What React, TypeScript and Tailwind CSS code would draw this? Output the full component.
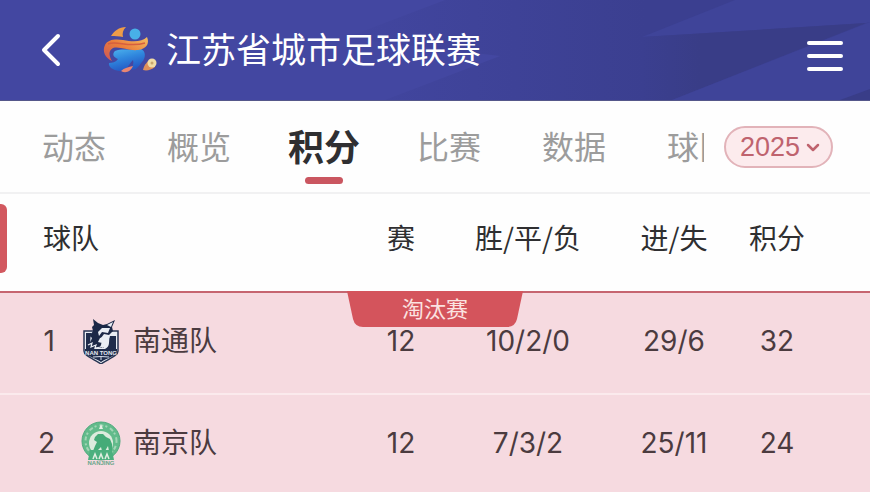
import React from "react";

const tabs = ["动态", "概览", "积分", "比赛", "数据", "球队"];

function LeagueLogo() {
  return (
    <svg className="h-[52px] w-[56px] shrink-0" viewBox="0 0 56 52" aria-hidden="true">
      <defs>
        <linearGradient id="body" x1="0" y1="0" x2="0.4" y2="1">
          <stop offset="0" stopColor="#4fb6ee" />
          <stop offset="0.5" stopColor="#2f86dd" />
          <stop offset="1" stopColor="#2358c4" />
        </linearGradient>
        <linearGradient id="ribbon" x1="0" y1="1" x2="1" y2="0">
          <stop offset="0" stopColor="#c9545a" />
          <stop offset="0.5" stopColor="#ea7c3c" />
          <stop offset="1" stopColor="#f6c062" />
        </linearGradient>
      </defs>
      <path d="M9 12 C12 7 17 3 24 3 C21 6 20 9 21 13 C17 12 13 12 9 12Z" fill="#ee9c48" />
      <circle cx="33" cy="10" r="5.5" fill="#48b0e8" />
      <path d="M13 27 C20 24 30 27 39 25 C44 27 44 34 40 38 C36 43 34 47 29 45 C31 42 32 39 31 36 C27 40 24 48 17 47 C11 46 6 43 7 39 C10 39 14 38 16 35 C11 33 10 30 13 27Z" fill="url(#body)" />
      <path d="M10 37 C3 34 0 27 3 21 C6 15 14 15 21 16 C31 18 40 18 45 13 C48 20 44 25 36 26 C26 27 18 22 11 24 C6 27 7 32 10 37Z" fill="url(#ribbon)" />
      <path d="M6 20 C15 16 26 24 43 19" fill="none" stroke="#d65f3e" strokeWidth="1.5" />
      <path d="M19 47 C22 44 27 43 31 42 C29 47 24 50 19 47Z" fill="#ea8672" />
      <path d="M41 46 C42 41 45 37 50 35 L53 43 C49 46 45 47 41 46Z" fill="#e0905a" />
      <circle cx="50" cy="39" r="4.5" fill="#f1dba4" />
      <circle cx="50" cy="39" r="1.5" fill="#c9a56d" />
    </svg>
  );
}

function NantongBadge() {
  return (
    <svg className="h-[46px] w-10 shrink-0" viewBox="0 0 40 46" role="img" aria-label="南通队队徽">
      <path d="M3 13 H37 V33 C37 38 27 41 20 46 C13 41 3 38 3 33Z" fill="#e9edf4" stroke="#283553" strokeWidth="1.5" />
      <path d="M5 15 H11 C8 21 9 26 14 31 H5Z" fill="#1f2c4c" />
      <path d="M29 18 H35 V31 H24 C30 28 27 23 29 18Z" fill="#1f2c4c" />
      <path d="M12 1 L17 5 L22 7 L26 6 L34 2 L31 9 L32 13 L28 17 L23 16 L20 20 L24 21 L20 26 L23 30 H11 L9 25 L11 20 L9 18 L12 13 L11 9 L13 7Z" fill="#1c2847" />
      <path d="M26 7 L32 4 L30 9Z M21 10 L29 10 L27 15 L21 14 L18 18 L17 14Z M19 20 L25 18 L29 19 L24 22 L26 26 L22 30 L19 29 L21 25 L17 24Z" fill="#e9edf4" />
      <path d="M7 27 L11 25 L10 29 L15 27 L14 30 L20 29" fill="none" stroke="#e9edf4" strokeWidth="1.2" />
      <path d="M4 31 H36 V34 C35 38 26 40 20 44 C14 40 5 38 4 34Z" fill="#1f2c4c" />
      <text x="20" y="37" textAnchor="middle" fontSize="6" fontWeight="700" fontFamily="Liberation Sans, sans-serif" fill="#e4e8f0">NAN TONG</text>
      <path d="M12 39 Q20 38 28 39 M20 39 V42" fill="none" stroke="#d8deea" strokeWidth="1" />
    </svg>
  );
}

function NanjingBadge() {
  return (
    <svg className="h-[46px] w-10 shrink-0" viewBox="0 0 40 46" role="img" aria-label="南京队队徽">
      <circle cx="20" cy="21" r="19" fill="#62bb8b" stroke="#4fa97d" strokeWidth="1" />
      <circle cx="20" cy="21" r="15.5" fill="none" stroke="#a3d5b6" strokeWidth="2" strokeDasharray="2 3 4 2" />
      <circle cx="20" cy="23" r="12" fill="#dcebdd" />
      <path d="M20 4 L22 9 H18Z" fill="#e7efe5" />
      <path d="M14 17 L17 14 L22 14 L25 17 L29 19 L31 24 L31 31 H28 L27 26 L24 31 H21 L20 27 L16 31 H12 L14 26 L16 22 L13 20Z" fill="#45ab78" />
      <path d="M9 30 H31 L33 40 H7Z" fill="#4bb07e" />
      <path d="M12 39 L14 34 L16 39 M18 39 L20 34 L22 39 M24 39 L26 34 L28 39" fill="none" stroke="#e0eee1" strokeWidth="1.5" />
      <text x="20" y="45" textAnchor="middle" fontSize="6" fontWeight="700" fontFamily="Liberation Sans, sans-serif" fill="#6aa58a">NANJING</text>
    </svg>
  );
}

const rows = [
  { rank: 1, team: "南通队", Badge: NantongBadge, played: "12", record: "10/2/0", goals: "29/6", points: "32" },
  { rank: 2, team: "南京队", Badge: NanjingBadge, played: "12", record: "7/3/2", goals: "25/11", points: "24" },
];

function Header() {
  return (
    <header className="relative flex h-[101px] items-center border-b border-[#55578a] bg-[#4347a1] px-[27px] text-white">
      <svg className="absolute inset-0 h-full w-full" viewBox="0 0 870 100" preserveAspectRatio="none" aria-hidden="true">
        <defs>
          <linearGradient id="shade" gradientUnits="userSpaceOnUse" x1="345" y1="0" x2="645" y2="0">
            <stop offset="0" stopColor="#4246a0" />
            <stop offset="1" stopColor="#3b3f90" />
          </linearGradient>
          <linearGradient id="wedge" gradientUnits="userSpaceOnUse" x1="642" y1="0" x2="700" y2="0">
            <stop offset="0" stopColor="#3b3f90" />
            <stop offset="1" stopColor="#393d87" />
          </linearGradient>
        </defs>
        <path d="M445 0 L345 38 L500 56 L385 100 H870 V0Z" fill="url(#shade)" />
        <path d="M735 0 L642 37 L866 23 L870 22 V0Z" fill="#3f4499" />
        <path d="M642 37 L866 23 L672 100 H642Z" fill="url(#wedge)" />
        <path d="M870 22 L672 100 H870Z" fill="#3f4499" />
        <path d="M840 100 L870 89 V100Z" fill="#393d88" />
      </svg>
      <button type="button" aria-label="返回" className="relative flex h-12 w-12 items-center justify-center">
        <svg className="h-[34px] w-5" viewBox="0 0 20 34" fill="none" stroke="currentColor" strokeWidth="4" strokeLinecap="round" strokeLinejoin="round">
          <path d="M17 3 L3 17 L17 31" />
        </svg>
      </button>
      <div className="relative ml-[27px] flex grow items-center gap-2">
        <LeagueLogo />
        <h1 className="pb-1 text-[35px] leading-[48px]">江苏省城市足球联赛</h1>
      </div>
      <button type="button" aria-label="菜单" className="relative mt-3 flex w-9 flex-col gap-[9px]">
        <span className="h-1 w-full rounded-full bg-white" />
        <span className="h-1 w-full rounded-full bg-white" />
        <span className="h-1 w-full rounded-full bg-white" />
      </button>
    </header>
  );
}

function TabBar() {
  return (
    <div className="flex h-[93px] items-center border-b-2 border-[#f1f1f2] pr-[37px]">
      <nav className="flex h-full min-w-0 grow items-center gap-[61px] overflow-hidden pl-[42px]">
        {tabs.map((tab) =>
          tab === "积分" ? (
            <a key={tab} href="#" aria-current="page" className="relative flex h-full w-16 shrink-0 items-center justify-center pb-1 text-[36px] font-bold whitespace-nowrap text-[#2f2f31]">
              {tab}
              <span className="absolute bottom-2 h-[7px] w-[38px] rounded-full bg-[#ca5660]" />
            </a>
          ) : (
            <a key={tab} href="#" className="w-16 shrink-0 pb-1 text-[32px] whitespace-nowrap text-[#9c9c9c]">
              {tab}
            </a>
          )
        )}
      </nav>
      <div className="relative ml-5 shrink-0">
        <select aria-label="赛季" className="block h-[42px] w-[109px] appearance-none rounded-full border-2 border-[#e2b3b9] bg-[#fcebed] pl-[14px] font-['Liberation_Sans',Arial,sans-serif] text-[27px] leading-[38px] text-[#bf636e]">
          <option>2025</option>
        </select>
        <svg className="pointer-events-none absolute top-[17px] right-[13px] h-[9px] w-[14px]" viewBox="0 0 14 9" fill="none" stroke="#bf636e" strokeWidth="2.5" strokeLinecap="round" strokeLinejoin="round" aria-hidden="true">
          <path d="M2 2 L7 7 L12 2" />
        </svg>
      </div>
    </div>
  );
}

function Standings() {
  return (
    <main className="relative text-[#2f2f31]">
      <span className="absolute top-[10px] left-0 h-[69px] w-[7px] rounded-r-md bg-[#d2585f]" />
      <table className="w-full table-fixed border-collapse">
        <colgroup>
          <col className="w-[55px]" />
          <col />
          <col className="w-[82px]" />
          <col className="w-[172px]" />
          <col className="w-[120px]" />
          <col className="w-[136px]" />
        </colgroup>
        <thead>
          <tr className="h-[98px] border-b-2 border-[#c66570] text-[28px] whitespace-nowrap">
            <th scope="col" colSpan={2} className="pb-3 pl-[43px] text-left font-normal">球队</th>
            <th scope="col" className="pb-3 font-normal">赛</th>
            <th scope="col" className="pb-3 font-normal">胜/平/负</th>
            <th scope="col" className="pb-3 font-normal">进/失</th>
            <th scope="col" className="pr-[50px] pb-3 font-normal">积分</th>
          </tr>
        </thead>
        <tbody className="bg-[#f6dae0] text-center font-[Inter,'Noto_Sans_CJK_SC',sans-serif] text-[28px] text-[#4b3b3f]">
          {rows.map(({ rank, team, Badge, played, record, goals, points }) => (
            <tr key={rank} className="h-[102px] border-b-2 border-[#fbeaed]">
              <td className="pb-1 text-right">{rank}</td>
              <td className="pb-1">
                <div className="flex items-center gap-3 pl-[26px]">
                  <Badge />
                  <span>{team}</span>
                </div>
              </td>
              <td className="pb-1">{played}</td>
              <td className="pb-1">{record}</td>
              <td className="pb-1">{goals}</td>
              <td className="pr-[50px] pb-1">{points}</td>
            </tr>
          ))}
        </tbody>
      </table>
      <div className="absolute inset-x-0 top-[97px] flex justify-center">
        <div className="relative h-9 w-44 text-center text-[22px] leading-[33px] text-[#fbe3e1]">
          <svg className="absolute inset-0 h-full w-full" viewBox="0 0 176 36" aria-hidden="true">
            <path d="M0 0 H176 L170 28 Q168 36 160 36 H16 Q8 36 6 28Z" fill="#d4545c" />
          </svg>
          <span className="relative">淘汰赛</span>
        </div>
      </div>
    </main>
  );
}

export default function App() {
  return (
    <div className="h-screen overflow-x-hidden overflow-y-auto bg-[#fefefe] font-['Noto_Sans_CJK_SC',sans-serif] [scrollbar-width:none]">
      <Header />
      <TabBar />
      <Standings />
    </div>
  );
}
